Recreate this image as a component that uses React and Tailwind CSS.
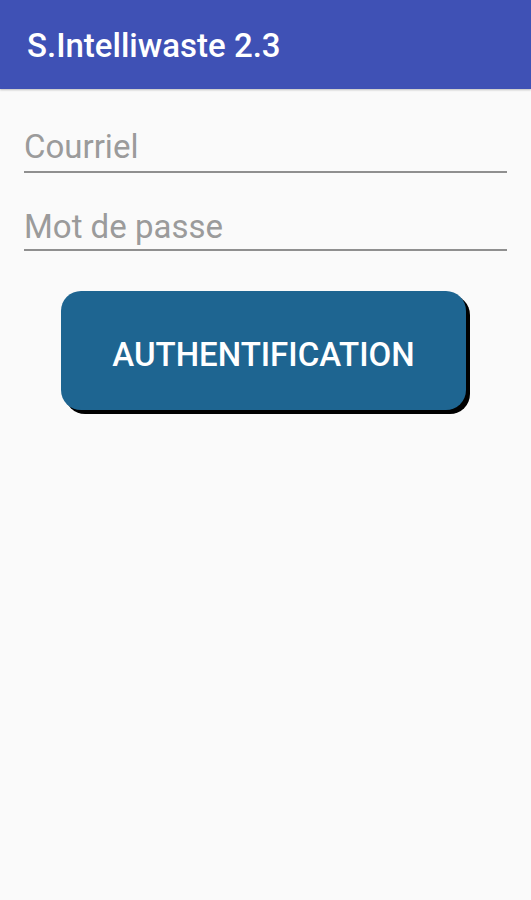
export default function App() {
  return (
    <div className="min-h-[900px] bg-[#fafafa] font-['Roboto',sans-serif]">
      {/* Toolbar */}
      <div className="h-[89px] bg-[#3f51b5] flex items-center px-[27px] shadow-[0_1px_2px_rgba(0,0,0,0.25)]">
        <h1 className="text-white text-[33px] font-medium leading-none mt-[1px]">S.Intelliwaste 2.3</h1>
      </div>

      {/* Form */}
      <div className="px-[24px] pt-[36px]">
        <div className="h-[48px] border-b-2 border-[#8f8f8f] flex items-end">
          <span className="text-[#9b9b9b] text-[33px] leading-none pb-[8px]">Courriel</span>
        </div>
        <div className="h-[78px] border-b-2 border-[#8f8f8f] flex items-end">
          <span className="text-[#9b9b9b] text-[33px] leading-none pb-[6px]">Mot de passe</span>
        </div>
      </div>

      <div className="pl-[61px] pt-[40px]">
        <button className="w-[405px] h-[119px] rounded-[20px] bg-[#1e6591] text-white text-[33px] font-medium leading-none pt-[8px] shadow-[4px_4px_0_#000] flex items-center justify-center">
          AUTHENTIFICATION
        </button>
      </div>
    </div>
  );
}
